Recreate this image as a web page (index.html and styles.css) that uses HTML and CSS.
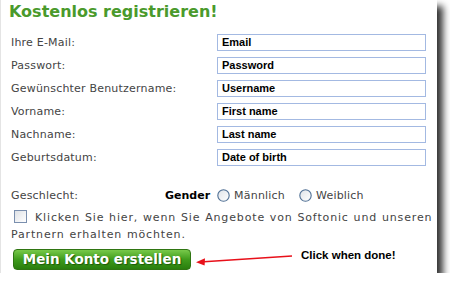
FILE: index.html
```html
<!DOCTYPE html>
<html lang="de">
<head>
    <meta charset="UTF-8">
    <title>Kostenlos registrieren</title>
    <link rel="stylesheet" href="styles.css">
</head>
<body>
    <div class="card">
        <h1 class="title">Kostenlos registrieren!</h1>
        <div class="fields">
            <div class="row">
                <label class="label">Ihre E-Mail:</label>
                <div class="field">Email</div>
            </div>
            <div class="row">
                <label class="label">Passwort:</label>
                <div class="field">Password</div>
            </div>
            <div class="row">
                <label class="label">Gewünschter Benutzername:</label>
                <div class="field">Username</div>
            </div>
            <div class="row">
                <label class="label">Vorname:</label>
                <div class="field">First name</div>
            </div>
            <div class="row">
                <label class="label">Nachname:</label>
                <div class="field">Last name</div>
            </div>
            <div class="row">
                <label class="label">Geburtsdatum:</label>
                <div class="field">Date of birth</div>
            </div>
        </div>

        <div class="gender-row">
            <span class="gender-label">Geschlecht:</span>
            <span class="gender-tag">Gender</span>
            <span class="radio"><svg width="13" height="13" viewBox="0 0 13 13"><defs><linearGradient id="rg" x1="0" y1="0" x2="1" y2="1"><stop offset="0" stop-color="#dfe3e8"/><stop offset="1" stop-color="#ffffff"/></linearGradient></defs><circle cx="6.5" cy="6.5" r="5.7" fill="url(#rg)" stroke="#4f6f94" stroke-width="1.1"/></svg>Männlich</span>
            <span class="radio"><svg width="13" height="13" viewBox="0 0 13 13"><circle cx="6.5" cy="6.5" r="5.7" fill="url(#rg)" stroke="#4f6f94" stroke-width="1.1"/></svg>Weiblich</span>
        </div>

        <p class="optin"><span class="checkbox"></span>Klicken Sie hier, wenn Sie Angebote von Softonic und unseren Partnern erhalten möchten.</p>

        <div class="submit-row">
            <span class="btn">Mein Konto erstellen</span>
            <svg class="arrow" width="100" height="14" viewBox="0 0 100 14">
                <line x1="4" y1="9" x2="96" y2="3" stroke="#e8101a" stroke-width="1.6"/>
                <path d="M0 9.3 L9 5.2 L8.6 12.6 Z" fill="#e8101a"/>
            </svg>
            <span class="hint">Click when done!</span>
        </div>
    </div>
</body>
</html>
```

FILE: styles.css
```css
body {
  margin: 0;
  background-color: #fff;
  font-family: "DejaVu Sans", Verdana, sans-serif;
}

/* Card */
.card {
  width: 437px;
  height: 273px;
  box-sizing: border-box;
  padding: 2px 0 0 8px;
  background-color: #fff;
  border-left: 1px solid #e4e4e4;
  box-shadow: 6px 6px 7px rgba(0, 0, 0, 0.8);
}

.title {
  margin: 0 0 12px 0;
  font-size: 16px;
  line-height: 20px;
  font-weight: bold;
  color: #4a9a2c;
}

/* Fields */
.fields {
  display: flex;
  flex-direction: column;
  gap: 6px;
}

.row {
  display: flex;
  align-items: center;
  height: 17px;
}

.label {
  width: 206px;
  padding-left: 2px;
  font-size: 11px;
  letter-spacing: 0.2px;
  color: #444;
}

.field {
  width: 209px;
  height: 17px;
  box-sizing: border-box;
  border: 1px solid #a3b9e2;
  padding-left: 4px;
  font-family: "Liberation Sans", Arial, sans-serif;
  font-size: 11px;
  font-weight: bold;
  line-height: 15px;
  color: #000;
}

/* Gender */
.gender-row {
  display: flex;
  align-items: center;
  margin-top: 23px;
  font-size: 11px;
  letter-spacing: 0.2px;
  color: #444;
}

.gender-label {
  width: 154px;
  padding-left: 2px;
}

.gender-tag {
  font-weight: bold;
  letter-spacing: 0;
  color: #000;
  margin-right: 7px;
}

.radio {
  display: flex;
  align-items: center;
  gap: 4px;
  margin-right: 14px;
}

/* Opt-in */
.optin {
  margin: 7px 0 0 0;
  padding: 0 4px 0 2px;
  font-size: 11px;
  line-height: 17px;
  letter-spacing: 0.85px;
  word-spacing: 0.5px;
  color: #444;
  text-indent: 3px;
}

.checkbox {
  display: inline-block;
  width: 11px;
  height: 11px;
  margin-right: 8px;
  vertical-align: -2px;
  border: 1px solid #7a8fae;
  background: linear-gradient(135deg, #dfe2e6, #fff);
}

/* Submit */
.submit-row {
  display: flex;
  align-items: center;
  margin-top: 6px;
}

.btn {
  display: inline-block;
  width: 178px;
  height: 21px;
  box-sizing: border-box;
  margin-left: 4px;
  border: 1px solid #2f7512;
  border-radius: 4px;
  background: linear-gradient(#78c94a, #3f9c1c 50%, #2a7e0e);
  color: #fff;
  font-size: 13.5px;
  font-weight: bold;
  line-height: 19px;
  text-align: center;
  text-shadow: 1px 1px 1px #1d5a08;
}

.arrow {
  margin: 0 0 0 5px;
  align-self: center;
}

.hint {
  margin-left: 5px;
  margin-top: -10px;
  font-family: "Liberation Sans", Arial, sans-serif;
  font-size: 11.5px;
  font-weight: bold;
  color: #000;
}
```
